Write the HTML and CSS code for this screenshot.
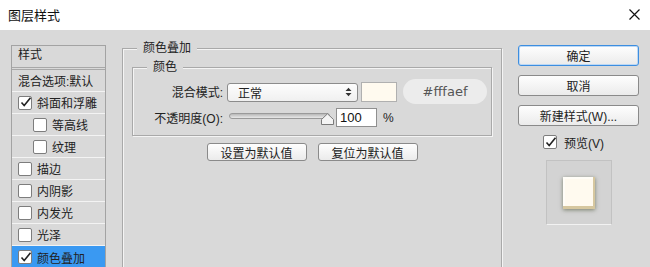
FILE: index.html
```html
<!DOCTYPE html>
<html lang="zh-CN">
<head>
<meta charset="utf-8">
<title>图层样式</title>
<link rel="stylesheet" href="styles.css">
</head>
<body>
<div class="titlebar">
  <span class="title">图层样式</span>
  <svg class="close" width="11" height="11" viewBox="0 0 11 11"><path d="M0.5 0.5 L10.5 10.5 M10.5 0.5 L0.5 10.5" stroke="#111" stroke-width="1.2" fill="none"/></svg>
</div>
<div class="main">
  <div class="styles-list">
    <div class="list-head">样式</div>
    <div class="row">混合选项:默认</div>
    <div class="row"><span class="cb checked"><svg width="13" height="13" viewBox="0 0 13 13"><path d="M2.5 6.5 L5.2 9.6 L11.5 1.8" stroke="#222" stroke-width="1.6" fill="none"/></svg></span>斜面和浮雕</div>
    <div class="row sub"><span class="cb"></span>等高线</div>
    <div class="row sub"><span class="cb"></span>纹理</div>
    <div class="row"><span class="cb"></span>描边</div>
    <div class="row"><span class="cb"></span>内阴影</div>
    <div class="row"><span class="cb"></span>内发光</div>
    <div class="row"><span class="cb"></span>光泽</div>
    <div class="row active"><span class="cb checked"><svg width="13" height="13" viewBox="0 0 13 13"><path d="M2.5 6.5 L5.2 9.6 L11.5 1.8" stroke="#222" stroke-width="1.6" fill="none"/></svg></span>颜色叠加</div>
  </div>

  <fieldset class="group outer">
    <legend>颜色叠加</legend>
    <fieldset class="group inner">
      <legend>颜色</legend>
      <div class="form">
        <div class="lbl">混合模式:</div>
        <div class="ctrls">
          <div class="select"><span>正常</span>
            <svg width="7" height="10" viewBox="0 0 7 10"><path d="M0.5 4 L3.5 0.8 L6.5 4 Z M0.5 6 L3.5 9.2 L6.5 6 Z" fill="#333"/></svg>
          </div>
          <div class="swatch"></div>
          <div class="pill">#fffaef</div>
        </div>
        <div class="lbl">不透明度(O):</div>
        <div class="ctrls ctrls2">
          <div class="slider">
            <div class="track"></div>
            <svg class="thumb" width="13" height="12" viewBox="0 0 13 12"><path d="M0.5 11.5 L0.5 6.5 L6.5 0.8 L12.5 6.5 L12.5 11.5 Z" fill="#f4f4f4" stroke="#7a7a7a" stroke-width="1"/></svg>
          </div>
          <div class="num">100</div>
          <span class="pct">%</span>
        </div>
      </div>
    </fieldset>
    <div class="defaults">
      <div class="btn small">设置为默认值</div>
      <div class="btn small">复位为默认值</div>
    </div>
  </fieldset>

  <div class="side">
    <div class="btn big focus">确定</div>
    <div class="btn big">取消</div>
    <div class="btn big">新建样式(W)...</div>
    <div class="preview-check"><span class="cb checked"><svg width="13" height="13" viewBox="0 0 13 13"><path d="M2.5 6.5 L5.2 9.6 L11.5 1.8" stroke="#222" stroke-width="1.6" fill="none"/></svg></span>预览(V)</div>
    <div class="preview"><div class="sample"></div></div>
  </div>
</div>
</body>
</html>
```

FILE: styles.css
```css
* { box-sizing: border-box; }
html, body { margin: 0; padding: 0; }
body {
  width: 650px;
  height: 267px;
  overflow: hidden;
  font-family: "Liberation Sans", "Noto Sans CJK SC", sans-serif;
  font-size: 12px;
  color: #222;
  background: #d9d9d9;
}
.titlebar {
  height: 30px;
  background: #fff;
  display: flex;
  align-items: center;
  justify-content: space-between;
  padding: 0 10px 1px 8px;
}
.title { font-size: 13px; color: #111; }
.close { margin-top: -1px; }

.main {
  height: 237px;
  display: flex;
  align-items: flex-start;
  padding-left: 11px;
  overflow: hidden;
}

/* left styles list */
.styles-list {
  width: 95px;
  margin-top: 15px;
  border: 1px solid #a3a3a3;
  border-bottom: none;
}
.list-head {
  height: 24px;
  padding: 1px 0 0 6px;
  line-height: 16px;
  border-bottom: 3px double #a8a8a8;
}
.row {
  height: 22px;
  display: flex;
  align-items: center;
  gap: 5px;
  padding-left: 6px;
  border-bottom: 1px solid #f3f3f3;
  white-space: nowrap;
}
.row.sub { padding-left: 21px; }
.row.active { background: #3a99f2; border-bottom: none; }
.cb {
  width: 14px;
  height: 14px;
  flex: none;
  background: #fff;
  border: 1px solid #7d7d7d;
  border-radius: 2px;
  display: inline-flex;
  align-items: center;
  justify-content: center;
  overflow: visible;
}
.cb svg { flex: none; }

/* fieldsets */
.group {
  margin: 0;
  border: 1px solid #a9a9a9;
  box-shadow: inset 1px 1px 0 #f4f4f4, 1px 1px 0 #f4f4f4;
  min-width: 0;
}
.group legend {
  padding: 0 6px;
  line-height: 14px;
  height: 14px;
  background: #d9d9d9;
}
.outer {
  width: 380px;
  height: 260px;
  margin: 11px 0 0 16px;
  padding: 5px 9px 0 9px;
}
.outer > legend { margin-left: 5px; }
.inner {
  padding: 5px 0 8px 0;
}
.inner > legend { margin-left: 14px; }

.form {
  display: grid;
  grid-template-columns: 90px 1fr;
  column-gap: 4px;
  row-gap: 4px;
  align-items: center;
}
.lbl { text-align: right; white-space: nowrap; }
.ctrls { display: flex; align-items: center; height: 25px; }
.ctrls2 { height: 19px; }
.select {
  width: 131px;
  height: 19px;
  border: 1px solid #8c8c8c;
  border-radius: 3px;
  background: linear-gradient(#fdfdfd, #f0f0f0);
  display: flex;
  align-items: center;
  justify-content: space-between;
  padding: 0 5px 0 10px;
  margin-top: 1px;
}
.swatch {
  width: 36px;
  height: 20px;
  margin-left: 3px;
  background: #fffaef;
  border: 1px solid #b0b0b0;
}
.pill {
  width: 84px;
  height: 25px;
  margin-left: 6px;
  border-radius: 13px;
  background: #ececec;
  color: #555;
  font-family: "DejaVu Sans", sans-serif;
  font-size: 13px;
  display: flex;
  align-items: center;
  justify-content: center;
}
.slider {
  width: 107px;
  height: 19px;
  margin-left: 2px;
  display: flex;
  align-items: center;
  position: relative;
}
.track {
  width: 101px;
  height: 6px;
  border-radius: 3px;
  border: 1px solid #9a9a9a;
  background: linear-gradient(#b8b8b8, #e8e8e8);
  margin-top: -3px;
}
.thumb { position: absolute; left: 92px; top: 5px; }
.num {
  width: 41px;
  height: 19px;
  background: #fff;
  border: 1px solid #8f8f8f;
  font-size: 13px;
  line-height: 17px;
  padding-left: 3px;
  color: #111;
}
.pct { margin-left: 6px; }

.defaults {
  display: flex;
  justify-content: center;
  gap: 11px;
  margin-top: 7px;
}
.btn {
  display: flex;
  align-items: center;
  justify-content: center;
  border: 1px solid #8a8a8a;
  border-radius: 3px;
  background: linear-gradient(#fefefe, #ebebeb);
  white-space: nowrap;
}
.btn.small { width: 100px; height: 18px; }

/* right side */
.side {
  width: 121px;
  margin: 15px 0 0 16px;
  display: flex;
  flex-direction: column;
  align-items: center;
}
.btn.big { width: 121px; height: 21px; margin-bottom: 9px; font-size: 12px; }
.btn.focus { border-color: #3d8ee0; box-shadow: inset 0 0 0 1px #bcd8f5; }
.preview-check {
  display: flex;
  align-items: center;
  gap: 7px;
  height: 16px;
  margin-top: -1px;
  margin-left: -10px;
}
.preview {
  width: 66px;
  height: 65px;
  margin-top: 10px;
  background: #d3d3d3;
  border: 1px solid #c2c2c2;
  border-bottom-color: #f2f2f2;
  display: flex;
  align-items: center;
  justify-content: center;
}
.sample {
  width: 32px;
  height: 32px;
  background: #fffaef;
  box-shadow: inset -2px -3px 0 #d6c79f, inset 2px 2px 0 #fffdf7, 0 1px 4px rgba(60,70,40,0.6);
}
```
